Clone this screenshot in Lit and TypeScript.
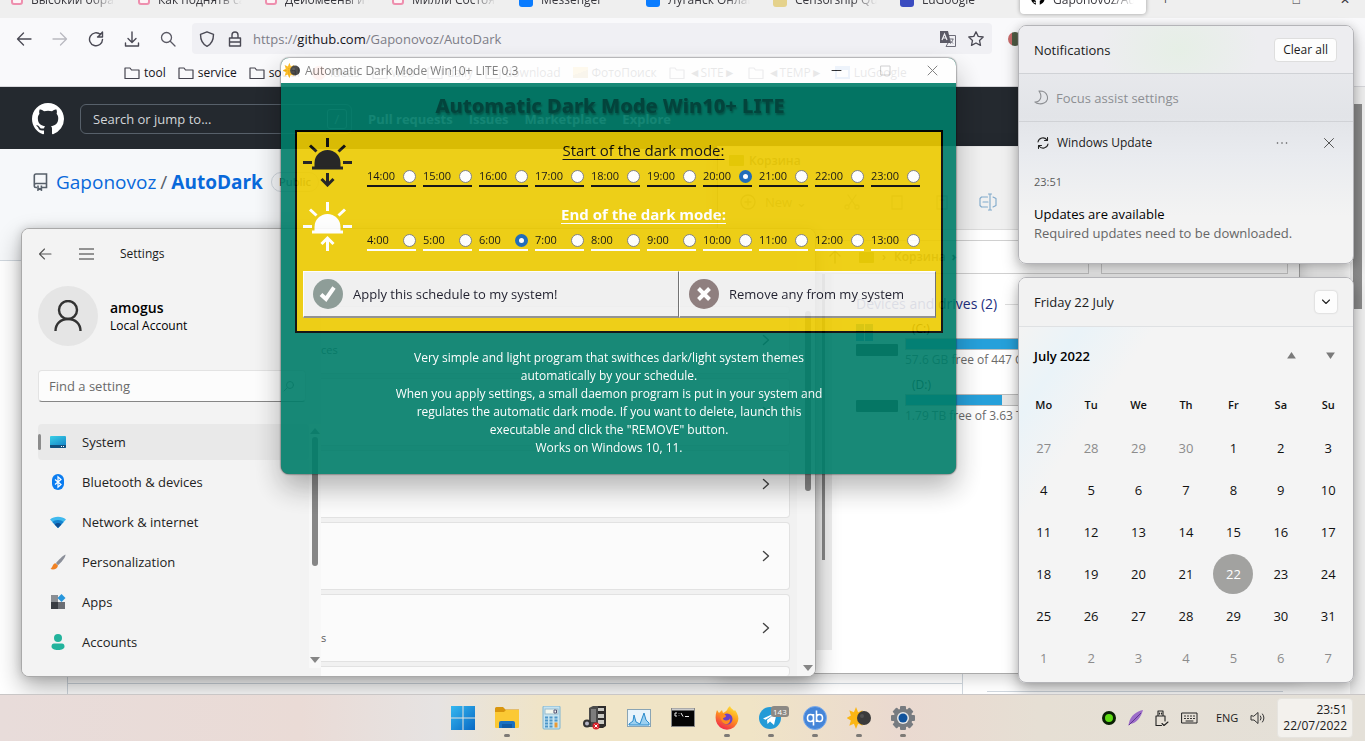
import { LitElement, html, svg, css, nothing } from "lit";
import { customElement, state } from "lit/decorators.js";
import { classMap } from "lit/directives/class-map.js";

const base = css`
  :host {
    display: block;
    box-sizing: border-box;
    font-family: "Open Sans", "Noto Sans", sans-serif;
    font-size: 13px;
    line-height: 18px;
    color: #1b1b1b;
  }
  *, *::before, *::after { box-sizing: border-box; }
  svg { display: block; flex: none; }
  button, input { font: inherit; color: inherit; }
  button { border: 0; background: none; padding: 0; margin: 0; }
  a { color: inherit; text-decoration: none; }
  h1, h2, h3, p, ul { margin: 0; padding: 0; font: inherit; list-style: none; }
`;

const line = (w: number, h: number, d: string, stroke = "#3b3a45", sw = 1.3) => html`
  <svg width=${w} height=${h} viewBox="0 0 ${w} ${h}" fill="none" stroke=${stroke} stroke-width=${sw}
    stroke-linecap="round" stroke-linejoin="round"><path d=${d}></path></svg>`;

const folder = () => line(16, 14, "M1 12V2h5l1.5 2H15v8.500H1z", "#45444f", 1.2);

/* Eight-pointed sun, half covered by a dark disc. */
const sunPoints = Array.from({ length: 16 }, (_, i) => {
  const r = i % 2 ? 5.5 : 9.5;
  const a = (i * Math.PI) / 8;
  return `${(9 + r * Math.sin(a)).toFixed(1)},${(12 - r * 1.15 * Math.cos(a)).toFixed(1)}`;
}).join(" ");
const sunMoonArt = svg`<polygon points=${sunPoints} fill="#fbb614"/><circle cx="17" cy="12" r="7" fill="#3b3b3b"/><circle cx="15" cy="10" r="2" fill="#515151"/>`;

/* ------------------------------------------------------------------ */

interface Tab { title: string; color: string }

@customElement("browser-window")
export class BrowserWindow extends LitElement {
  static styles = [base, css`
    :host { display: flex; flex-direction: column; height: 100%; background: #fff; font-size: 12px; }
    .tabs { display: flex; align-items: flex-end; height: 18px; overflow: hidden; background: #efefef; color: #38373d; }
    .tab { display: flex; flex: none; align-items: flex-end; gap: 8px; width: 127px; padding: 0 12px 8px 11px; height: 34px; }
    .tab span { flex: 1; overflow: hidden; white-space: nowrap; line-height: 20px;
      -webkit-mask-image: linear-gradient(90deg, #000 70%, transparent); mask-image: linear-gradient(90deg, #000 70%, transparent); }
    .fav { flex: none; width: 14px; height: 14px; margin-bottom: 3px; border-radius: 3px; }
    .fav.outline { border: 2px solid #ee8fae; background: #fdf3f6; width: 12px; height: 12px; margin-bottom: 5px; }
    .tab.active { width: 126px; height: 34px; margin-left: 4px; background: #fff; border-radius: 4px; box-shadow: 0 0 4px rgba(0,0,0,.35); margin-bottom: 4px; padding-bottom: 4px; }
    .tab.active svg { margin-bottom: 5px; }
    .extra { flex: 1; display: flex; justify-content: flex-end; align-items: flex-end; gap: 40px; padding: 0 15px 8px 0; line-height: 20px; }
    .extra .plus { margin-right: auto; padding-left: 16px; }
    .nav { display: flex; align-items: center; gap: 20px; padding: 4px 16px 3px; height: 40px; background: #f9f9fb; }
    .nav button { width: 16px; }
    .url { display: flex; align-items: center; gap: 12px; flex: none; width: 60%; height: 31px; padding: 0 8px 0 7px; margin: 0 -4px; border-radius: 4px; background: #f0f0f4; }
    .address { flex: 1; margin-left: -2px; font-size: 13px; line-height: 20px; color: #7d7d87; white-space: nowrap; }
    .address b { font-weight: 400; color: #15141a; }
    .avatar { width: 14px; height: 14px; border-radius: 7px; background: linear-gradient(90deg, #c76a6a 30%, #4e5c44 30% 60%, #b9a); }
    .marks { display: flex; align-items: center; gap: 12px; height: 29px; padding: 2px 0 1px 124px; background: #f9f9fb; border-bottom: 1px solid #d8d8dc; color: #15141a; }
    .marks a { display: flex; align-items: center; gap: 4px; white-space: nowrap; }
    .dot { width: 14px; height: 14px; border-radius: 7px; background: #ff8a70; }
    .pic { width: 15px; height: 11px; background: linear-gradient(160deg, #f7c948 50%, #c99a3d 50%); }
    .cal { width: 15px; height: 13px; border: 2px solid #4b8bd8; border-top-width: 4px; }
    .page { flex: 1; display: grid; grid-template-columns: 1fr 15px; min-height: 0; }
    .track { background: #f0f0f0; padding: 17px 3px 0 3px; }
    .thumb { height: 205px; background: #8b8b8b; }
    .content { display: flex; flex-direction: column; }
    header { display: flex; align-items: center; gap: 16px; height: 62px; padding: 2px 32px 0; background: #24292f; color: #d5d8dc; font-weight: 700; font-size: 13px; }
    .search { display: flex; align-items: center; width: 272px; height: 30px; padding: 0 4px 0 12px; border: 1px solid #57606a; border-radius: 6px; }
    .search input { flex: 1; min-width: 0; padding: 0; border: 0; outline: 0; background: none; color: #fff; font-size: 13px; font-weight: 400; }
    .search input::placeholder { color: #d2d5d9; }
    .slash { width: 20px; height: 20px; border: 1px solid #6e7681; border-radius: 3px; text-align: center; font-weight: 400; color: #8b929a; }
    .repo { display: flex; align-items: center; gap: 8px; height: 112px; padding: 0 33px 46px; background: #f6f8fa; border-bottom: 1px solid #d0d7de; font-size: 19px; line-height: 30px; color: #0969da; }
    .repo i { color: #57606a; font-style: normal; margin: 0 -4px; }
    .repo b { font-weight: 700; }
    .badge { border: 1px solid #d0d7de; border-radius: 10px; padding: 0 7px; font-size: 11px; line-height: 18px; font-weight: 600; color: #57606a; }
    .cols { flex: 1; display: grid; grid-template-columns: 1fr 296px; gap: 24px; padding: 0 67px; }
    .main { display: flex; flex-direction: column; min-height: 0; }
    .box { height: 423px; border: solid #d0d7de; border-width: 0 1px 1px; }
    .box.next { height: 30px; border-bottom: 0; }
    .side { height: 431px; border-bottom: 1px solid #d0d7de; }
  `];

  private tabs: Tab[] = [
    { title: "Высокий образец", color: "" },
    { title: "Как поднять сайт", color: "" },
    { title: "Дейомеены и ос", color: "" },
    { title: "Милли Состояние", color: "" },
    { title: "Messenger", color: "#0a7cff" },
    { title: "Луганск Онлайн", color: "#0a7cff" },
    { title: "Censorship Quarter", color: "#e5d28c" },
    { title: "LuGoogle", color: "#3b4cc0" },
  ];

  render() {
    return html`
      <div class="tabs">
        ${this.tabs.map(t => html`<div class="tab">
          <div class=${classMap({ fav: true, outline: !t.color })} style=${t.color ? `background:${t.color}` : nothing}></div>
          <span>${t.title}</span></div>`)}
        <div class="tab active"><svg width="14" height="14" viewBox="0 0 16 16"><path d="M8 0a8 8 0 0 0-2.500 15.600V13.500C3 14 2.700 12.400 2.700 12.400h1.600l1.200.9V11C3 10.500 2.500 9 2.500 7L4 2.700l2 1h4l2-1L13.500 7c0 2-1 3.500-3.500 4v4.600A8 8 0 0 0 8 0z"></path></svg><span>Gaponovoz/Au</span></div>
        <div class="extra"><span class="plus">+</span><span>□</span><span>✕</span></div>
      </div>
      <div class="nav">
        <button aria-label="Back">${line(16, 16, "M15 8H1.500M7.500 2l-6 6 6 6", "#4a4954")}</button>
        <button aria-label="Forward">${line(16, 16, "M1 8h13.500M8.500 2l6 6-6 6", "#b9b9c0")}</button>
        <button aria-label="Reload">${line(16, 16, "M14.500 8.500A6.500 6.500 0 1 1 12.500 3.600M14.500 1v5h-5l2.500-2z", "#4a4954", 1.4)}</button>
        <button aria-label="Downloads">${line(16, 16, "M8 1v10M4 7.500L8 11.500 12 7.500M1.500 12v3h13v-3", "#4a4954", 1.4)}</button>
        <button aria-label="Search">${line(16, 16, "M10.500 10.500L15 15M11.500 6.500a5 5 0 1 1-10 0 5 5 0 0 1 10 0z", "#5a5964")}</button>
        <div class="url">
          ${line(16, 16, "M8 .8l6.500 2.500C14.500 9 13 13 8 15.300 3 13 1.500 9 1.500 3.300z", "#4a4954", 1.4)}
          ${line(16, 16, "M2.500 7h11v8h-11zM5 7V4a3 3 0 0 1 6 0v3M2.500 11h11", "#4a4954", 1.4)}
          <div class="address">https://<b>github.com</b>/Gaponovoz/AutoDark</div>
          <svg width="16" height="16" viewBox="0 0 16 16"><path fill="#5b5a66" d="M0 0h8l3 12H0z"></path><path fill="none" stroke="#f0f0f4" stroke-width="1.200" d="M2 9l2.500-6L7 9M3 7h3"></path><path fill="none" stroke="#6d6c78" d="M9 4.500h6.500v11H6L8 12M9.500 8h4M13 8c-.5 2.500-1.500 3.500-3 4.500M10 9.500l3 3"></path></svg>
          ${line(16, 16, "M8 .8l2.200 4.600 5 .6-3.700 3.400 1 5L8 12l-4.500 2.400 1-5L.8 6l5-.6z", "#4a4954")}
        </div>
        <div class="avatar"></div>
      </div>
      <div class="marks">
        <a href="#">${folder()}tool</a><a href="#">${folder()}service</a><a href="#">${folder()}social</a>
        <a href="#"><span class="dot"></span>ideas</a><a href="#">${folder()}web</a><a href="#">${folder()}daily</a>
        <a href="#">${folder()}download</a><a href="#"><span class="pic"></span>ФотоПоиск</a>
        <a href="#">${folder()}◄SITE►</a><a href="#">${folder()}◄TEMP►</a><a href="#"><span class="cal"></span>LuGoogle</a>
      </div>
      <div class="page">
        <div class="content">
          <header>
            <svg width="32" height="32" viewBox="0 0 16 16" fill="#fff"><path d="M8 0C3.580 0 0 3.580 0 8c0 3.540 2.290 6.530 5.470 7.590.4.070.55-.17.55-.38 0-.19-.01-.82-.01-1.490-2.010.37-2.530-.49-2.690-.94-.09-.23-.48-.94-.82-1.130-.28-.15-.68-.52-.01-.53.63-.01 1.080.58 1.230.82.72 1.210 1.870.87 2.330.66.07-.52.28-.87.51-1.070-1.780-.2-3.640-.89-3.640-3.950 0-.87.31-1.590.82-2.150-.08-.2-.36-1.020.08-2.120 0 0 .67-.21 2.200.82a7.600 7.600 0 0 1 4 0c1.530-1.040 2.200-.82 2.200-.82.44 1.100.16 1.920.08 2.120.51.56.82 1.270.82 2.150 0 3.070-1.870 3.750-3.650 3.950.29.25.54.73.54 1.480 0 1.070-.01 1.930-.01 2.200 0 .21.15.46.55.38A8.010 8.010 0 0 0 16 8c0-4.420-3.580-8-8-8z"></path></svg>
            <label class="search"><input placeholder="Search or jump to..." aria-label="Search" /><span class="slash">/</span></label>
            <a href="#">Pull requests</a><a href="#">Issues</a><a href="#">Marketplace</a><a href="#">Explore</a>
          </header>
          <div class="repo">
            <svg width="15" height="18" viewBox="0 0 15 18" fill="none" stroke="#57606a" stroke-width="1.600"><path d="M4 14.500H3a1.700 1.700 0 0 1-1.700-1.700V2.700C1.300 1.700 2 1 3 1h10.500v13.500H9M1.300 12.500C1.300 11 2 10.500 3 10.500h10.500M5 12.500V17l1.700-1.200L8.400 17v-4.500"></path></svg>
            <a href="#">Gaponovoz</a><i>/</i><a href="#"><b>AutoDark</b></a><span class="badge">Public</span>
          </div>
          <div class="cols">
            <div class="main"><div class="box"></div><div class="box next"></div></div>
            <div class="side"></div>
          </div>
        </div>
        <div class="track"><div class="thumb"></div></div>
      </div>`;
  }
}

/* ------------------------------------------------------------------ */

@customElement("explorer-window")
export class ExplorerWindow extends LitElement {
  static styles = [base, css`
    :host { display: flex; flex-direction: column; background: #fff; border: 1px solid #aaa; border-top-color: #e6e6e6; box-shadow: 0 4px 16px rgba(0,0,0,.2); font-size: 12px; }
    .title { display: flex; align-items: center; gap: 5px; height: 27px; padding-left: 11px; background: #f0f0f0; color: #777; font-weight: 600; }
    .bin { width: 15px; height: 11px; background: #93a64b; border-radius: 1px; }
    .tools { display: flex; align-items: center; gap: 29px; height: 56px; padding-left: 22px; background: #f0f0f0; border-bottom: 1px solid #dcdcdc; color: #999; }
    .tools .new { display: flex; align-items: center; gap: 9px; font-size: 13px; margin-right: 8px; }
    .bar { display: flex; align-items: stretch; gap: 12px; padding: 10px 11px 0 97px; height: 44px; }
    .path { flex: 262; display: flex; align-items: center; gap: 8px; padding-left: 13px; border: 1px solid #d0d0d0; font-weight: 600; color: #777; }
    .path .bin { margin-left: 10px; }
    .path b { color: #333; margin-left: -2px; }
    .find { flex: 188; border: 1px solid #d0d0d0; }
    .body { flex: 1; display: flex; min-height: 0; }
    .tree { width: 114px; display: flex; justify-content: flex-end; margin-bottom: 23px; background: linear-gradient(90deg, #fff 90px, #eee 90px); }
    .tree i { width: 3px; height: 286px; margin-right: 7px; background: #888; }
    .drives { flex: 1; padding: 20px 24px 0; }
    h2 { display: flex; align-items: center; gap: 8px; color: #1e2f80; font-size: 14px; line-height: 20px; }
    h2::after { content: ""; flex: 1; height: 1px; background: #ddd; }
    .drive { display: grid; grid-template-columns: 42px 1fr; column-gap: 7px; height: 56px; padding-top: 8px; white-space: nowrap; color: #6a6a6a; }
    .drive .icon { padding-top: 2px; display: flex; flex-direction: column; height: 34px; }
    .drive .disk { margin-top: auto; height: 12px; background: #3a3a3a; border-radius: 1px; }
    .name { padding-left: 7px; line-height: 14px; color: #222; }
    .meter { height: 12px; margin: 2px 0 1px; background: #e6e6e6; border: 1px solid #bcbcbc; width: 220px; }
    .meter i { display: block; height: 100%; background: #26a0da; }
  `];

  private drives = [
    { name: "(C:)", used: 87, text: "57.6 GB free of 447 GB", system: true },
    { name: "(D:)", used: 44, text: "1.79 TB free of 3.63 TB", system: false },
  ];

  render() {
    return html`
      <div class="title"><span class="bin"></span>Корзина</div>
      <div class="tools">
        <span class="new">${line(16, 16, "M15 8A7 7 0 1 1 1 8a7 7 0 0 1 14 0zM8 5v6M5 8h6", "#aaa")}New ⌄</span>
        ${line(16, 16, "M4 1l7 10M12 1L5 11M5 13a2 2 0 1 1-4 0 2 2 0 0 1 4 0zM15 13a2 2 0 1 1-4 0 2 2 0 0 1 4 0z", "#bbb")}
        ${line(16, 16, "M3 2h10v13H3z", "#bbb")}
        ${line(16, 16, "M3 2h10v13H3zM6 6h4", "#bbb")}
        ${line(18, 18, "M8.500 4H2.500L1 5.500v7L2.500 14h6M14 4l3 1.500v7L14 14M11 1v16M9.500 1h3M9.500 17h3M4 9h5", "#7fa9cb", 1.1)}
      </div>
      <div class="bar">
        <div class="path">${line(12, 14, "M6 13V1M1 6l5-5 5 5", "#888")}<span class="bin"></span>› <span>Корзина</span> <b>›</b></div>
        <div class="find"></div>
      </div>
      <div class="body">
        <div class="tree"><i></i></div>
        <div class="drives">
          <h2>Devices and drives (2)</h2>
          ${this.drives.map(d => html`<div class="drive">
            <div class="icon">
              ${d.system ? html`<svg width="17" height="17" viewBox="0 0 17 17" fill="#2a9bd6"><path d="M0 0h8v8H0zM9 0h8v8H9zM0 9h8v8H0zM9 9h8v8H9z"></path></svg>` : nothing}
              <div class="disk"></div>
            </div>
            <div><div class="name">${d.name}</div><div class="meter"><i style="width:${d.used}%"></i></div>${d.text}</div>
          </div>`)}
        </div>
      </div>`;
  }
}

/* ------------------------------------------------------------------ */

const navIcons: Record<string, unknown> = {
  System: svg`<defs><linearGradient id="s" x2=".6" y2="1"><stop stop-color="#3ad0e6"/><stop offset="1" stop-color="#1687c9"/></linearGradient></defs><rect y="2" width="16" height="12" rx="1" fill="url(#s)"/><path d="M0 11h16v2a1 1 0 0 1-1 1H1a1 1 0 0 1-1-1z" fill="#12507e"/><path d="M11 12.500h1M13 12.500h1" stroke="#fff"/>`,
  "Bluetooth & devices": svg`<rect x="2" width="12" height="16" rx="6" fill="#0a7cf0"/><path d="M5 5.500l6 5-3 2.700V2.800l3 2.700-6 5" fill="none" stroke="#fff" stroke-width="1.200"/>`,
  "Network & internet": svg`<path d="M0 5.500C4 1.700 12 1.700 16 5.500L8 14z" fill="#3fb9ee"/><path d="M2.300 8C5 5.300 11 5.300 13.700 8L8 14z" fill="#1583cf"/><path d="M4.600 10.400c2-1.800 4.800-1.800 6.800 0L8 14z" fill="#0d4f95"/>`,
  Personalization: svg`<path d="M15.500.6c-2 .4-8 6.400-9.500 8.600l2 2C10.500 9.500 16 3 15.500.6z" fill="#8b8f99"/><path d="M5.500 9.200C2.500 9.500 3 13 .5 15c3 1 7 .2 7.500-3.500z" fill="#f08224"/>`,
  Apps: svg`<path d="M1 1h7v7H1z" fill="#8a8d92"/><path d="M1 8h7v7H1z" fill="#393c42"/><path d="M8 8h7v7H8z" fill="#6b6e74"/><path d="M11.500 0l4 4-4 4-4-4z" fill="#2796dc"/>`,
  Accounts: svg`<circle cx="8" cy="4" r="4" fill="#22b39c"/><path d="M1.500 12.500c0-2 1-3 2.500-3h8c1.500 0 2.500 1 2.500 3S12 16 8 16s-6.500-1.500-6.500-3.500z" fill="#22b39c"/>`,
};

@customElement("settings-window")
export class SettingsWindow extends LitElement {
  static styles = [base, css`
    :host { display: grid; grid-template-columns: 299px 1fr 18px; background: #f1f1f1; border: 1px solid #a9a9a9; border-radius: 8px; overflow: hidden; box-shadow: 0 10px 24px rgba(0,0,0,.32), 0 0 10px rgba(0,0,0,.15); }
    .side { display: grid; grid-template-rows: auto 1fr; min-height: 0; background: #f3f3f3; padding: 15px 0 8px; }
    .top { display: flex; align-items: center; gap: 26px; padding: 0 16px; font-size: 12px; height: 20px; }
    .top button { width: 15px; }
    .user { display: flex; align-items: center; gap: 12px; padding: 22px 16px 24px; line-height: 17px; font-size: 12px; color: #000; }
    .user b { display: block; font-size: 14px; font-weight: 600; line-height: 18px; }
    .face { display: grid; place-items: center; width: 60px; height: 60px; border-radius: 30px; background: #e5e5e5; }
    .find { display: flex; align-items: center; height: 32px; margin: 0 15px 22px 16px; padding: 0 10px; background: #fcfcfc; border: 1px solid #e3e3e3; border-bottom-color: #868686; border-radius: 4px; }
    .find input { flex: 1; min-width: 0; border: 0; outline: 0; background: none; padding: 0; font-size: 13px; }
    .find input::placeholder { color: #6a6a6a; }
    .cols { display: grid; grid-template-columns: 1fr 12px; min-height: 0; }
    .list { display: grid; align-content: start; gap: 4px; padding-left: 16px; }
    .list a { display: flex; align-items: center; gap: 16px; height: 36px; border-radius: 4px; font-size: 13px; color: #222; white-space: nowrap; }
    .list a.on { background: #e9e9e9; }
    .list a::before { content: ""; width: 3px; height: 16px; margin-right: -7px; border-radius: 2px; }
    .list a.on::before { background: #8c8c8c; }
    .scroll { display: flex; flex-direction: column; align-items: center; gap: 3px; background: #f8f8f8; }
    .scroll i { width: 6px; height: 129px; border-radius: 3px; background: #868686; }
    .up, .down { border: solid transparent; border-width: 0 5px; }
    .up { border-bottom: 6px solid #868686; margin-top: 4px; }
    .down { border-top: 6px solid #868686; margin-top: auto; margin-bottom: 5px; }
    .cards { display: flex; flex-direction: column; justify-content: flex-end; gap: 4px; min-height: 0; padding-right: 7px; }
    .card { display: flex; align-items: center; flex: none; height: 68px; padding-right: 19px; border: 1px solid #e2e2e2; border-left: 0; border-radius: 0 4px 4px 0; background: #fbfbfb; font-size: 11px; color: #5c5c5c; }
    .card:last-child { height: 10px; border-bottom: 0; }
    .card span { flex: 1; padding-top: 20px; }
    .right { display: flex; flex-direction: column; align-items: center; background: #f5f5f5; padding-left: 4px; }
    .right i { width: 6px; height: 180px; margin-top: 82px; border-radius: 3px; background: #868686; }
  `];

  @state() private current = "System";

  render() {
    return html`
      <div class="side">
        <div>
          <div class="top">
            <button aria-label="Back">${line(15, 12, "M13 6H1.500M6.500 1l-5 5 5 5", "#555", 1.1)}</button>
            <button aria-label="Menu">${line(15, 12, "M0 1h15M0 6h15M0 11h15", "#333", 1)}</button>
            <span>Settings</span>
          </div>
          <div class="user">
            <span class="face"><svg width="28" height="32" viewBox="0 0 28 32" fill="none" stroke="#333" stroke-width="2.400"><circle cx="14" cy="10" r="9"></circle><path d="M1.500 31c0-7 5-12 12.500-12s12.500 5 12.500 12"></path></svg></span>
            <span><b>amogus</b>Local Account</span>
          </div>
          <label class="find"><input placeholder="Find a setting" aria-label="Find a setting" />${line(12, 12, "M1 11l3-3M10.500 5a3.500 3.500 0 1 1-7 0 3.500 3.500 0 0 1 7 0z", "#777", 1)}</label>
        </div>
        <div class="cols">
          <div class="list">
            ${Object.keys(navIcons).map(n => html`
              <a href="#" class=${classMap({ on: n === this.current })} @click=${(e: Event) => { e.preventDefault(); this.current = n; }}>
                <svg width="16" height="16" viewBox="0 0 16 16">${navIcons[n]}</svg>${n}</a>`)}
          </div>
          <div class="scroll"><b class="up"></b><i></i><b class="down"></b></div>
        </div>
      </div>
      <div class="cards">
        ${["ces", "", "", "", "s", ""].map((t, i) => html`<div class="card"><span>${t}</span>
          ${i < 5 ? line(8, 12, "M1.500 1.500L6.500 6l-5 4.500", "#444", 1.4) : nothing}</div>`)}
      </div>
      <div class="right"><i></i><b class="down"></b></div>`;
  }
}

/* ------------------------------------------------------------------ */

const horizon = (color: string, down: boolean) => html`
  <svg width="49" height="49" viewBox="0 0 49 49" fill="none" stroke=${color} stroke-width="3">
    <path d="M24.500 0v9M7 7.500l6.500 6M42 7.500l-6.500 6M0 24.500h9M40 24.500h9"></path>
    <path d="M11.500 30V25a13 13 0 0 1 26 0v5z" fill=${color} stroke="none"></path>
    <path d="M9 30h31"></path>
    <path d=${down ? "M24.500 35v11M18.500 41l6 6 6-6" : "M24.500 49V37M18.500 42l6-6 6 6"}></path>
  </svg>`;

@customElement("scheduler-window")
export class SchedulerWindow extends LitElement {
  static styles = [base, css`
    :host { border-radius: 8px; overflow: hidden; background: #007d69; box-shadow: 0 14px 28px rgba(0,0,0,.32), 0 0 2px #000; opacity: .9; font-size: 12px; }
    .bar { display: flex; align-items: center; gap: 5px; height: 25px; padding: 0 18px 0 2px; background: #fff; color: #777; }
    .bar span { flex: 1; }
    .bar button { margin-left: 31px; }
    .body { padding: 11px 13px 17px 14px; }
    h1 { margin-right: 18px; text-align: center; font-family: "Noto Sans", "Open Sans", sans-serif; font-size: 20px; line-height: 24px; font-weight: 800; color: #00473e; text-shadow: 1px 2px 2px rgba(0,0,0,.3); }
    .panel { margin-top: 12px; padding: 6px 5px 13px 6px; border: 2px solid #000; background: #edcb00; color: #000; }
    .row { display: grid; grid-template-columns: 49px 1fr; gap: 15px; height: 64px; }
    .row > div { padding-right: 16px; }
    h2 { font-size: 15px; line-height: 24px; text-align: center; text-decoration: underline; text-underline-offset: 3px; }
    .end h2 { color: #fff; font-weight: 700; }
    .times { display: grid; grid-template-columns: repeat(10, 1fr); gap: 7px; padding-top: 5px; }
    .times label { display: flex; align-items: center; justify-content: space-between; height: 20px; border-bottom: 2px solid #000; font-size: 11px; }
    .end .times label { border-color: #fff; }
    .times input { appearance: none; width: 13px; height: 13px; margin: 0; border: 1px solid #777; border-radius: 7px; background: #fff; }
    .times input:checked { border: 4px solid #0a5fb5; }
    .buttons { display: grid; grid-template-columns: 376fr 257fr; margin-top: 5px; }
    .buttons button { display: flex; align-items: center; gap: 10px; height: 47px; padding-left: 9px; background: #f0f0f0; border: 1px solid #fff; border-right-color: #666; border-bottom: 2px solid #888; font-size: 13px; color: #0b0b1b; }
    p { margin: 16px 20px 0 0; text-align: center; line-height: 18px; color: #fff; }
  `];

  @state() private start = 20;
  @state() private end = 6;

  private times(kind: "start" | "end", from: number) {
    const chosen = this[kind];
    return html`<div class="times">${Array.from({ length: 10 }, (_, i) => from + i).map(h => html`
      <label>${h}:00<input type="radio" name=${kind} .checked=${h === chosen} @change=${() => { this[kind] = h; }} /></label>`)}</div>`;
  }

  render() {
    return html`
      <div class="bar"><svg width="17" height="17" viewBox="0 0 24 24">${sunMoonArt}</svg><span>Automatic Dark Mode Win10+ LITE 0.3</span>
        <button aria-label="Minimize">${line(15, 11, "M3 5.500h9", "#222", 1)}</button>
        <button aria-label="Maximize">${line(11, 11, "M1 1h9v9H1z", "#ccc", 1)}</button>
        <button aria-label="Close">${line(11, 11, "M1 1l9 9M10 1l-9 9", "#777", 1)}</button>
      </div>
      <div class="body">
        <h1>Automatic Dark Mode Win10+ LITE</h1>
        <div class="panel">
          <div class="row">${horizon("#111", true)}<div><h2>Start of the dark mode:</h2>${this.times("start", 14)}</div></div>
          <div class="row end">${horizon("#fff", false)}<div><h2>End of the dark mode:</h2>${this.times("end", 4)}</div></div>
          <div class="buttons">
            <button><svg width="30" height="30" viewBox="0 0 30 30"><circle cx="15" cy="15" r="15" fill="#84948f"></circle><path d="M8 15.500l5 4.500 8-11.500" fill="none" stroke="#fff" stroke-width="4"></path></svg>Apply this schedule to my system!</button>
            <button><svg width="30" height="30" viewBox="0 0 30 30"><circle cx="15" cy="15" r="15" fill="#857373"></circle><path d="M9.500 9.500l11 11M20.500 9.500l-11 11" fill="none" stroke="#fff" stroke-width="4"></path></svg>Remove any from my system</button>
          </div>
        </div>
        <p>Very simple and light program that swithces dark/light system themes<br />automatically by your schedule.<br />
          When you apply settings, a small daemon program is put in your system and<br />regulates the automatic dark mode. If you want to delete, launch this<br />executable and click the "REMOVE" button.<br />Works on Windows 10, 11.</p>
      </div>`;
  }
}

/* ------------------------------------------------------------------ */

const panel = css`
  :host { border: 1px solid #b4b4b8; border-radius: 8px; overflow: hidden; box-shadow: 0 8px 16px rgba(0,0,0,.28), 0 0 8px rgba(0,0,0,.12); }
`;

@customElement("notification-panel")
export class NotificationPanel extends LitElement {
  static styles = [base, panel, css`
    :host { background: linear-gradient(#ededf0, #e2e4e8 90px, #e9ebef 130px, #f3f3f3 190px); }
    .head { display: flex; align-items: center; justify-content: space-between; height: 47px; padding: 0 16px 0 15px; font-size: 13px; background: radial-gradient(ellipse 80px 60px at 48% 50%, #e6efe6, #ededf0); }
    .head button { height: 24px; padding: 0 8px; border: 1px solid #dedede; border-radius: 4px; background: #fdfdfd; font-size: 12px; }
    .focus { display: flex; align-items: center; gap: 8px; height: 49px; padding: 0 15px; border: solid #d0d2d6; border-width: 1px 0; color: #8d8f93; font-size: 13px; }
    .app { display: flex; align-items: center; height: 42px; padding: 0 19px 0 18px; font-size: 12px; gap: 8px; }
    .app span { flex: 1; }
    .app button { margin-left: 28px; }
    .note { padding: 9px 15px 20px; }
    .note time { display: block; font-size: 11px; color: #5b5b5b; margin-bottom: 14px; }
    .note h3 { color: #000; font-size: 13px; }
    .note p { color: #666; font-size: 13px; line-height: 20px; }
  `];
  render() {
    return html`
      <div class="head"><h2>Notifications</h2><button>Clear all</button></div>
      <div class="focus">${line(14, 15, "M5 1c9-.500 11 9 5 12-3 1.500-7 1-9-1 5 0 8-5 4-11z", "#8d8f93", 1.1)}Focus assist settings</div>
      <div class="app">${line(12, 12, "M1 5a5 5 0 0 1 9-2M10.500 .5V3.500h-3M11 7a5 5 0 0 1-9 2M1.500 11.500V8.500h3", "#222", 1.1)}<span>Windows Update</span>
        <button aria-label="More"><svg width="12" height="12" viewBox="0 0 12 12" fill="#555"><circle cx="1.500" cy="6" r=".8"></circle><circle cx="6" cy="6" r=".8"></circle><circle cx="10.500" cy="6" r=".8"></circle></svg></button>
        <button aria-label="Dismiss">${line(10, 10, "M.5 .5l9 9M9.500 .5l-9 9", "#555", 1)}</button></div>
      <div class="note"><time>23:51</time><h3>Updates are available</h3><p>Required updates need to be downloaded.</p></div>`;
  }
}

@customElement("calendar-panel")
export class CalendarPanel extends LitElement {
  static styles = [base, panel, css`
    :host { background: linear-gradient(125deg, #f3f3f3 30px, #eaf3f8 80px, #f4f4f4 140px); }
    .head { display: flex; align-items: center; justify-content: space-between; height: 49px; padding: 0 16px 0 15px; border-bottom: 1px solid #dfe1e3; background: #f2f2f2; font-size: 13px; }
    .head button { display: grid; place-items: center; width: 22px; height: 22px; border-radius: 4px; background: #fdfdfd; box-shadow: 0 0 2px #bbb; }
    .month { display: flex; align-items: center; gap: 30px; height: 57px; padding: 0 18px 0 15px; font-weight: 600; color: #000; }
    .month h3 { flex: 1; font-weight: 600; }
    table { width: 100%; border-collapse: collapse; table-layout: fixed; text-align: center; font-size: 13px; color: #111; }
    th { height: 43px; padding: 0 0 1px; font-size: 11px; font-weight: 600; }
    td { height: 42px; padding: 0; }
    td span { display: grid; place-items: center; width: 40px; height: 40px; margin: 0 auto; border-radius: 20px; }
    .out { color: #8c8c8c; }
    .today span { background: #a2a2a0; color: #fff; }
    .grid { padding: 0 1px 3px; }
  `];
  private first = new Date(2022, 5, 27);
  render() {
    const weeks = Array.from({ length: 6 }, (_, w) => Array.from({ length: 7 }, (_, d) =>
      new Date(this.first.getFullYear(), this.first.getMonth(), this.first.getDate() + w * 7 + d)));
    const tri = (d: string) => html`<svg width="9" height="7" viewBox="0 0 10 8" fill="#7a7a7a"><path d=${d}></path></svg>`;
    return html`
      <div class="head"><h2>Friday 22 July</h2><button aria-label="Collapse">${line(10, 6, "M1.500 1L5 4.500 8.500 1", "#222", 1.1)}</button></div>
      <div class="month"><h3>July 2022</h3><button aria-label="Previous">${tri("M0 7.500L5 0l5 7.500z")}</button><button aria-label="Next">${tri("M0 .5L5 8l5-7.500z")}</button></div>
      <div class="grid"><table>
        <thead><tr>${["Mo", "Tu", "We", "Th", "Fr", "Sa", "Su"].map(d => html`<th>${d}</th>`)}</tr></thead>
        <tbody>${weeks.map(w => html`<tr>${w.map(d => html`<td class=${classMap({ out: d.getMonth() !== 6, today: d.getMonth() === 6 && d.getDate() === 22 })}><span>${d.getDate()}</span></td>`)}</tr>`)}</tbody>
      </table></div>`;
  }
}

/* ------------------------------------------------------------------ */

const gear = Array.from({ length: 8 }, (_, i) => svg`<rect x="9" y="0" width="6" height="6" rx="1" fill="#777b80" transform="rotate(${i * 45} 12 12)"/>`);

const apps: { name: string; open?: boolean; badge?: string; art: unknown }[] = [
  { name: "Start", art: svg`<defs><linearGradient id="w" x2="1" y2="1"><stop stop-color="#35b8f0"/><stop offset="1" stop-color="#0868c4"/></linearGradient></defs><path fill="url(#w)" d="M0 0h11.500v11.500H0zM12.500 0H24v11.500H12.500zM0 12.500h11.500V24H0zM12.500 12.500H24V24H12.500z"/>` },
  { name: "File Explorer", open: true, art: svg`<path d="M0 2.500Q0 1 1.500 1H8l2.500 2.500H24V8H0z" fill="#d9960e"/><path d="M0 6h9l2-2h13v17a1 1 0 0 1-1 1H1a1 1 0 0 1-1-1z" fill="#fbc934"/><path d="M4 22v-5q0-2 2-2h12q2 0 2 2v5z" fill="#1770c2"/><path d="M7 18h10v4H7z" fill="#0e5aa5"/>` },
  { name: "Calculator", art: svg`<rect x="4" y="0" width="17" height="23" rx="1" fill="#c5e3f1" stroke="#7fb4d0"/><rect x="6" y="3" width="13" height="5" fill="#f4f7ee" stroke="#9bc"/><path d="M15 4h2.500v3H15z" fill="none" stroke="#557"/><path d="M6 11.500h3M10.500 11.500h3M15.500 11.500h3M6 14.500h3M10.500 14.500h3M15.500 14.500h3M6 17.500h3M10.500 17.500h3M6 20.500h3M10.500 20.500h3" stroke="#4d96c8" stroke-width="2"/><path d="M17 16.500v5" stroke="#ea9a35" stroke-width="3"/>` },
  { name: "Backup", art: svg`<path d="M6 2l4-2h5v21H6z" fill="#4a4a4a"/><path d="M8 3h5v13H8z" fill="#7d7d7d"/><path d="M15 0h8v20l-3 2h-5z" fill="#2e2c2c"/><path d="M15 2h6v3h-6zM15 8h6v4h-6zM15 14h6v4h-6z" fill="#c9c9c4"/><circle cx="4" cy="17.500" r="4" fill="#333"/><circle cx="4" cy="17.500" r="2" fill="#b5b5c5"/><circle cx="13" cy="20" r="3.500" fill="#d8222a"/><path d="M11.500 18.500l3 3M14.500 18.500l-3 3" stroke="#fff"/>` },
  { name: "Task Manager", art: svg`<rect x=".5" y="3.500" width="23" height="17" fill="#e8f4fb" stroke="#8aa4b4"/><path d="M2 18l4-3 1-6 2 7 4 2 4-11 2 7 3 3v2H2z" fill="#9cd0f0" stroke="#2b8bcb"/>` },
  { name: "Terminal", art: svg`<rect x=".5" y="2.500" width="23" height="18" fill="#050505" stroke="#888"/><path d="M1 3.500h22" stroke="#ccc" stroke-width="2"/><path d="M6 7H4v3h2M8 7.500v.5M8 9.500v.5M10 7l2 3.500M14 10.500h4" stroke="#eee" fill="none"/>` },
  { name: "Firefox", open: true, art: svg`<defs><linearGradient id="f" x1=".8" x2=".3" y2="1"><stop stop-color="#ffe53b"/><stop offset=".45" stop-color="#ff9a1c"/><stop offset="1" stop-color="#f0244f"/></linearGradient></defs><path d="M2 4l2 3 3-3 1 3c2-1 4-2 5-5l2-2c1 3 3 3 4 5l1-1c3 4 4 8 3 11A11.300 11.300 0 0 1 1 15C0 10 1 7 2 4z" fill="url(#f)"/><circle cx="12" cy="13" r="5.500" fill="#6b3fc9"/><path d="M5 8c3-1 5 0 6 2 0 2-3 1-3 3 3 3 7 1 7-1 1 4-2 7-5 6S5 13 5 8z" fill="#ff8a1e"/>` },
  { name: "Telegram", open: true, badge: "143", art: svg`<circle cx="11" cy="12" r="11" fill="#239bd7"/><path d="M4 12.500L18 6l-3 13-4-3.500-2.500 2.500L8 14l7-5.500L6.500 13.700z" fill="#fff"/>` },
  { name: "qBittorrent", open: true, art: svg`<circle cx="12" cy="12" r="11.500" fill="#4585d8" stroke="#7aabec"/><path d="M10.500 8v11.500M13.500 4.500V16M10.500 12a3 3.500 0 1 1-6 0 3 3.500 0 0 1 6 0zM19.500 12a3 3.500 0 1 1-6 0 3 3.500 0 0 1 6 0z" fill="none" stroke="#fff" stroke-width="1.600"/>` },
  { name: "Automatic Dark Mode", open: true, art: sunMoonArt },
  { name: "Settings", open: true, art: svg`${gear}<circle cx="12" cy="12" r="9.500" fill="#777b80"/><circle cx="12" cy="12" r="6" fill="#e8e8e8"/><circle cx="12" cy="12" r="4.500" fill="#0f529c"/>` },
];

@customElement("task-bar")
export class TaskBar extends LitElement {
  static styles = [base, css`
    :host { display: grid; grid-template-columns: 1fr auto 1fr; height: 47px; border-top: 1px solid #c9c6c6; background: linear-gradient(90deg, #e8dcda, #eadbd6 22%, #e6e3e2 32%, #f0e4c6 40%, #f0e4c6 55%, #ead9d0 66%, #e6dfd4 76%, #e4e0d8); font-size: 12px; }
    .apps { grid-column: 2; display: flex; padding-left: 1px; }
    .apps button { position: relative; display: flex; flex-direction: column; align-items: center; gap: 4px; width: 44px; padding-top: 11px; }
    .apps i { width: 6px; height: 3px; border-radius: 2px; background: #7d7a76; }
    .badge { position: absolute; top: 11px; left: 22px; padding: 0 2px; border-radius: 3px; background: #8c8984; color: #fff; font-size: 8px; line-height: 11px; }
    .tray { display: flex; justify-content: flex-end; align-items: center; gap: 12px; padding-right: 12px; }
    .led { width: 14px; height: 14px; border-radius: 7px; border: 3px solid #0a1f05; background: #5fdc14; }
    .tray .lang { margin-left: 6px; font-size: 11px; }
    .clock { display: block; padding: 3px 5px; margin-left: -2px; border: 1px solid #e6e4df; border-radius: 4px; background: #f3f1ed; text-align: right; font-size: 12px; line-height: 16px; }
  `];
  render() {
    return html`
      <div class="apps">${apps.map(a => html`<button aria-label=${a.name}>
        <svg width="24" height="24" viewBox="0 0 24 24">${a.art}</svg>
        ${a.open ? html`<i></i>` : nothing}${a.badge ? html`<span class="badge">${a.badge}</span>` : nothing}</button>`)}</div>
      <div class="tray">
        <span class="led"></span>
        <svg width="15" height="16" viewBox="0 0 15 16"><path d="M15 0C9 1 2 6 1 13l-1 3 2-2c7-1 11-7 13-14z" fill="#9c6cc8"></path><path d="M1 15L13 3" stroke="#5f3590" fill="none"></path></svg>
        ${line(14, 17, "M3 6V1h5v5M1 6h9v5M1 6v9.500h5.500M4.500 3v1M6.500 3v1M7 13.500l2 2 4-3.500", "#222", 1.1)}
        ${line(17, 12, "M1 1h15v10H1zM3.500 4h1M6.500 4h1M9.500 4h1M12.500 4h1M3.500 6.500h1M6.500 6.500h1M9.500 6.500h1M12.500 6.500h1M5 9h7", "#222", 1)}
        <span class="lang">ENG</span>
        ${line(17, 14, "M1 5v4h3l4 3.500v-11L4 5zM10.500 5q1.500 2 0 4M12.500 3q3 4 0 8", "#333", 1)}
        <button class="clock">23:51<br />22/07/2022</button>
      </div>`;
  }
}

/* ------------------------------------------------------------------ */

@customElement("app-root")
export class AppRoot extends LitElement {
  static styles = [base, css`
    :host { display: grid; grid-template-rows: 1fr auto; height: 100vh; overflow: hidden; }
    .desk { position: relative; min-height: 0; overflow: hidden; }
    explorer-window, settings-window, scheduler-window, .flyouts { position: absolute; }
    explorer-window { left: 717px; top: 146px; width: 583px; height: 528px; }
    settings-window { left: 21px; top: 228px; width: 795px; height: 449px; }
    scheduler-window { left: 281px; top: 58px; width: 675px; }
    .flyouts { right: 11px; top: 25px; width: 336px; display: grid; gap: 13px; }
  `];
  render() {
    return html`
      <div class="desk">
        <browser-window></browser-window>
        <explorer-window></explorer-window>
        <settings-window></settings-window>
        <scheduler-window></scheduler-window>
        <div class="flyouts"><notification-panel></notification-panel><calendar-panel></calendar-panel></div>
      </div>
      <task-bar></task-bar>`;
  }
}
